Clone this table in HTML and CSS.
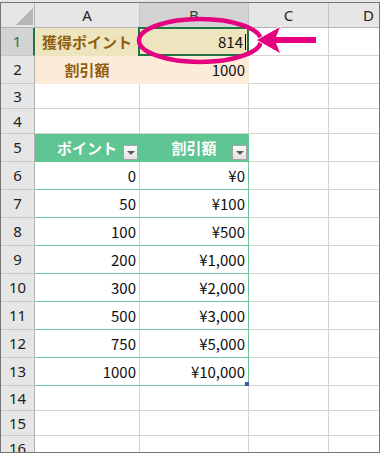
FILE: index.html
```html
<!DOCTYPE html>
<html lang="ja">
<head>
<meta charset="utf-8">
<link rel="stylesheet" href="styles.css">
</head>
<body>
<div class="sheet">
  <div class="grid">
    <div class="corner"><span class="tri"></span></div>
    <div class="ch">A</div><div class="ch sel">B</div><div class="ch">C</div><div class="ch">D</div>

    <div class="rh sel">1</div>
    <div class="c neu ctr bold">獲得ポイント</div>
    <div class="c neu num active">814<span class="caret"></span></div>
    <div class="c"></div><div class="c"></div>

    <div class="rh">2</div>
    <div class="c peach ctr bold">割引額</div>
    <div class="c peach num">1000</div>
    <div class="c"></div><div class="c"></div>

    <div class="rh">3</div><div class="c"></div><div class="c"></div><div class="c"></div><div class="c"></div>
    <div class="rh">4</div><div class="c"></div><div class="c"></div><div class="c"></div><div class="c"></div>

    <div class="rh">5</div>
    <div class="c th">ポイント<span class="dd"></span></div>
    <div class="c th">割引額<span class="dd"></span></div>
    <div class="c"></div><div class="c"></div>

    <div class="rh">6</div><div class="c td num">0</div><div class="c td b num">¥0</div><div class="c"></div><div class="c"></div>
    <div class="rh">7</div><div class="c td num">50</div><div class="c td b num">¥100</div><div class="c"></div><div class="c"></div>
    <div class="rh">8</div><div class="c td num">100</div><div class="c td b num">¥500</div><div class="c"></div><div class="c"></div>
    <div class="rh">9</div><div class="c td num">200</div><div class="c td b num">¥1,000</div><div class="c"></div><div class="c"></div>
    <div class="rh">10</div><div class="c td num">300</div><div class="c td b num">¥2,000</div><div class="c"></div><div class="c"></div>
    <div class="rh">11</div><div class="c td num">500</div><div class="c td b num">¥3,000</div><div class="c"></div><div class="c"></div>
    <div class="rh">12</div><div class="c td num">750</div><div class="c td b num">¥5,000</div><div class="c"></div><div class="c"></div>
    <div class="rh">13</div><div class="c td num">1000</div><div class="c td b num last">¥10,000</div><div class="c"></div><div class="c"></div>

    <div class="rh">14</div><div class="c"></div><div class="c"></div><div class="c"></div><div class="c"></div>
    <div class="rh">15</div><div class="c"></div><div class="c"></div><div class="c"></div><div class="c"></div>
    <div class="rh">16</div><div class="c"></div><div class="c"></div><div class="c"></div><div class="c"></div>
  </div>
  <svg class="overlay" width="380" height="453" viewBox="0 0 380 453">
    <ellipse cx="200" cy="40.5" rx="61" ry="21.5" fill="none" stroke="#e4007f" stroke-width="4.5"/>
    <polygon points="257,40 280,27 276,37 316,37 316,43 276,43 280,53" fill="#e4007f" stroke="#fff" stroke-width="2" stroke-linejoin="round" paint-order="stroke"/>
  </svg>
</div>
</body>
</html>
```
FILE: styles.css
```css
html, body {
  margin: 0;
  padding: 0;
}
body {
  background: #e6e6e6;
}
.sheet {
  position: relative;
  margin-top: 2px;
  width: 380px;
  height: 451px;
  box-sizing: border-box;
  border: 1px solid #767676;
  overflow: hidden;
  background: #fff;
}
.grid {
  display: grid;
  grid-template-columns: 34px 105px 109px 80px 80px;
  grid-template-rows: 25px 28px 28px 25px 25px repeat(9, 28px) 25px 25px 25px;
  width: 408px;
}
.grid > div {
  box-sizing: border-box;
  position: relative;
  display: flex;
  align-items: center;
  border-right: 1px solid #d4d4d4;
  border-bottom: 1px solid #d4d4d4;
  font-family: "Noto Sans CJK JP", "Noto Sans", sans-serif;
  font-size: 15px;
  line-height: 1;
  color: #111;
  padding: 0 3px;
  white-space: nowrap;
}
.corner {
  background: #e6e6e6;
}
.grid > .corner {
  border-right-color: #b4b4b4;
  border-bottom-color: #b4b4b4;
}
.tri {
  position: absolute;
  right: 1px;
  bottom: 2px;
  width: 17px;
  height: 17px;
  background: #b5b5b5;
  clip-path: polygon(100% 0, 100% 100%, 0 100%);
}
.grid > .ch {
  background: #e6e6e6;
  justify-content: center;
  border-right-color: #c4c4c4;
  border-bottom-color: #b4b4b4;
  font-family: "Noto Sans", "DejaVu Sans", sans-serif;
  font-size: 15px;
  color: #222;
}
.grid > .ch.sel {
  background: #d3d3d3;
  color: #1d4f33;
}
.grid > .rh {
  background: #e6e6e6;
  justify-content: center;
  border-right-color: #b0b0b0;
  border-bottom-color: #c8c8c8;
  font-family: "Noto Sans", "DejaVu Sans", sans-serif;
  font-size: 15px;
  color: #222;
  padding: 0;
}
.grid > .rh.sel {
  background: #d3d3d3;
  color: #217346;
  border-right: 2px solid #217346;
}
.num {
  justify-content: flex-end;
}
.grid > .ctr {
  justify-content: center;
}
.bold {
  font-weight: bold;
  color: #91600f;
}
.grid > .bold {
  color: #8f5e10;
}
.grid > .neu {
  background: #eee4bd;
  border-right-color: #eee4bd;
  border-bottom-color: #eee4bd;
}
.grid > .peach {
  background: #fcebd9;
  border-right-color: #fcebd9;
  border-bottom-color: #fcebd9;
}
.grid > .active {
  padding-right: 2px;
}
.active::after {
  content: "";
  position: absolute;
  left: -2px;
  top: -1px;
  right: -1px;
  bottom: -1px;
  border: 2px solid #217346;
}
.caret {
  display: inline-block;
  width: 1px;
  height: 16px;
  background: #000;
  margin-left: 2px;
}
.grid > .th {
  background: #5ec593;
  border-right-color: #5ec593;
  border-bottom-color: #5ec593;
  color: #fff;
  font-weight: bold;
  justify-content: center;
}
.dd {
  position: absolute;
  right: 1px;
  bottom: 1px;
  width: 15px;
  height: 15px;
  box-sizing: border-box;
  border: 1px solid #a3a3a3;
  background: linear-gradient(#fbfbfb, #e2e2e2);
}
.dd::after {
  content: "";
  position: absolute;
  left: 3px;
  top: 5px;
  border-left: 4px solid transparent;
  border-right: 4px solid transparent;
  border-top: 4px solid #5a5a5a;
}
.grid > .td {
  border-bottom-color: #6fc59a;
}
.grid > .td.b {
  border-right-color: #6fc59a;
  padding-right: 3px;
}
.last::after {
  content: "";
  position: absolute;
  right: -1px;
  bottom: -1px;
  width: 4px;
  height: 4px;
  background: #4155a8;
}
.overlay {
  position: absolute;
  left: -1px;
  top: -3px;
  pointer-events: none;
}
```
